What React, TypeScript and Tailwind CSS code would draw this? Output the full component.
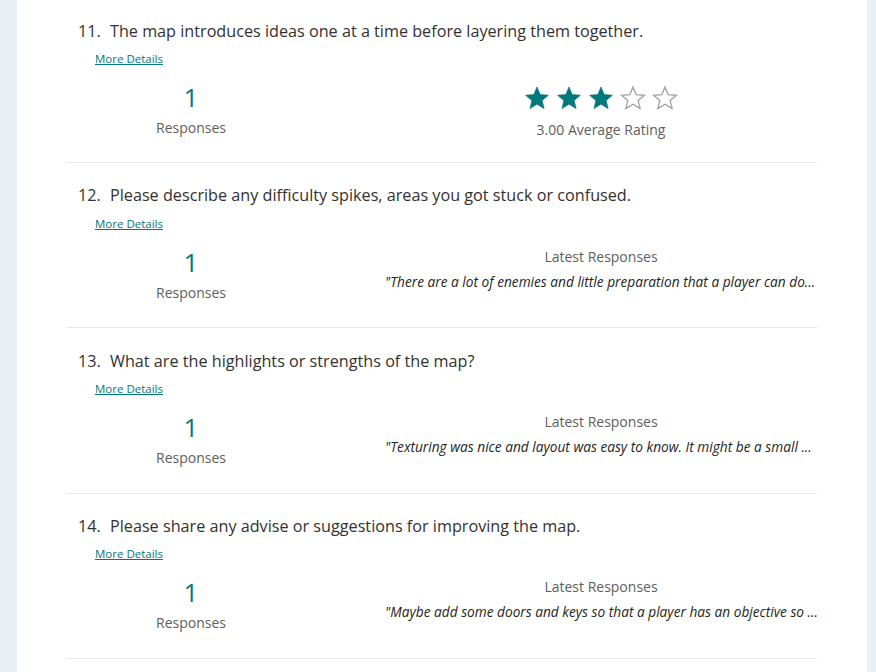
import React from "react";

const TEAL = "#03787c";

function Star({ filled }: { filled: boolean }) {
  return (
    <svg width="26" height="26" viewBox="0 0 24 24" className="block">
      <path
        d="M12 1.8l2.95 7.05 7.6.6-5.8 4.95 1.8 7.4L12 17.8l-6.55 4 1.8-7.4-5.8-4.95 7.6-.6z"
        fill={filled ? TEAL : "none"}
        stroke={filled ? TEAL : "#a0a0a0"}
        strokeWidth={filled ? 0.6 : 1.2}
        strokeLinejoin="miter"
      />
    </svg>
  );
}

type Q = {
  n: number;
  title: string;
  kind: "rating" | "text";
  quote?: string;
};

const questions: Q[] = [
  { n: 11, title: "The map introduces ideas one at a time before layering them together.", kind: "rating" },
  {
    n: 12,
    title: "Please describe any difficulty spikes, areas you got stuck or confused.",
    kind: "text",
    quote: "\"There are a lot of enemies and little preparation that a player can do...",
  },
  {
    n: 13,
    title: "What are the highlights or strengths of the map?",
    kind: "text",
    quote: "\"Texturing was nice and layout was easy to know. It might be a small ...",
  },
  {
    n: 14,
    title: "Please share any advise or suggestions for improving the map.",
    kind: "text",
    quote: "\"Maybe add some doors and keys so that a player has an objective so ...",
  },
];

function Section({ q, first }: { q: Q; first: boolean }) {
  return (
    <div className={`${first ? "pt-[19px] pb-[24px]" : "pt-[20.6px] pb-[24.8px]"} border-b border-[#e6e6e6]`}>
      <div className="flex items-center h-[24px] pl-[11px] text-[16.2px] text-[#323130]">
        <span className="w-[32px]">{q.n}.</span>
        <span>{q.title}</span>
      </div>
      <div className="mt-[6px] pl-[28px] h-[16px] leading-[16px]">
        <a className="text-[11.5px] underline text-[#03787c] cursor-pointer">More Details</a>
      </div>
      <div className="flex mt-[16px] h-[57px]">
        <div className="w-[248px] flex flex-col items-center">
          <div className="text-[26px] leading-[32px] text-[#03787c]">1</div>
          <div className="mt-[5px] text-[14px] leading-[20px] text-[#605e5c]">Responses</div>
        </div>
        <div className="ml-[70px] w-[432px] flex flex-col items-center">
          {q.kind === "rating" ? (
            <>
              <div className="mt-[4px] flex gap-[6px]">
                <Star filled />
                <Star filled />
                <Star filled />
                <Star filled={false} />
                <Star filled={false} />
              </div>
              <div className="mt-[9px] text-[14px] leading-[20px] text-[#605e5c] whitespace-nowrap">3.00 Average Rating</div>
            </>
          ) : (
            <>
              <div className="mt-[1px] text-[14px] leading-[20px] text-[#605e5c]">Latest Responses</div>
              <div className="mt-[6px] w-full text-[13.7px] leading-[18px] italic text-[#252423] whitespace-nowrap">
                {q.quote}
              </div>
            </>
          )}
        </div>
      </div>
    </div>
  );
}

export default function App() {
  return (
    <div
      className="w-[876px] h-[672px] overflow-hidden bg-[#e9f0f3] flex"
      style={{ fontFamily: "'Segoe UI', 'Open Sans', 'Noto Sans', sans-serif" }}
    >
      <div className="ml-[17px] w-[850px] bg-white h-full overflow-hidden">
        <div className="ml-[50px] w-[750px]">
          {questions.map((q, i) => (
            <Section key={q.n} q={q} first={i === 0} />
          ))}
        </div>
      </div>
    </div>
  );
}
